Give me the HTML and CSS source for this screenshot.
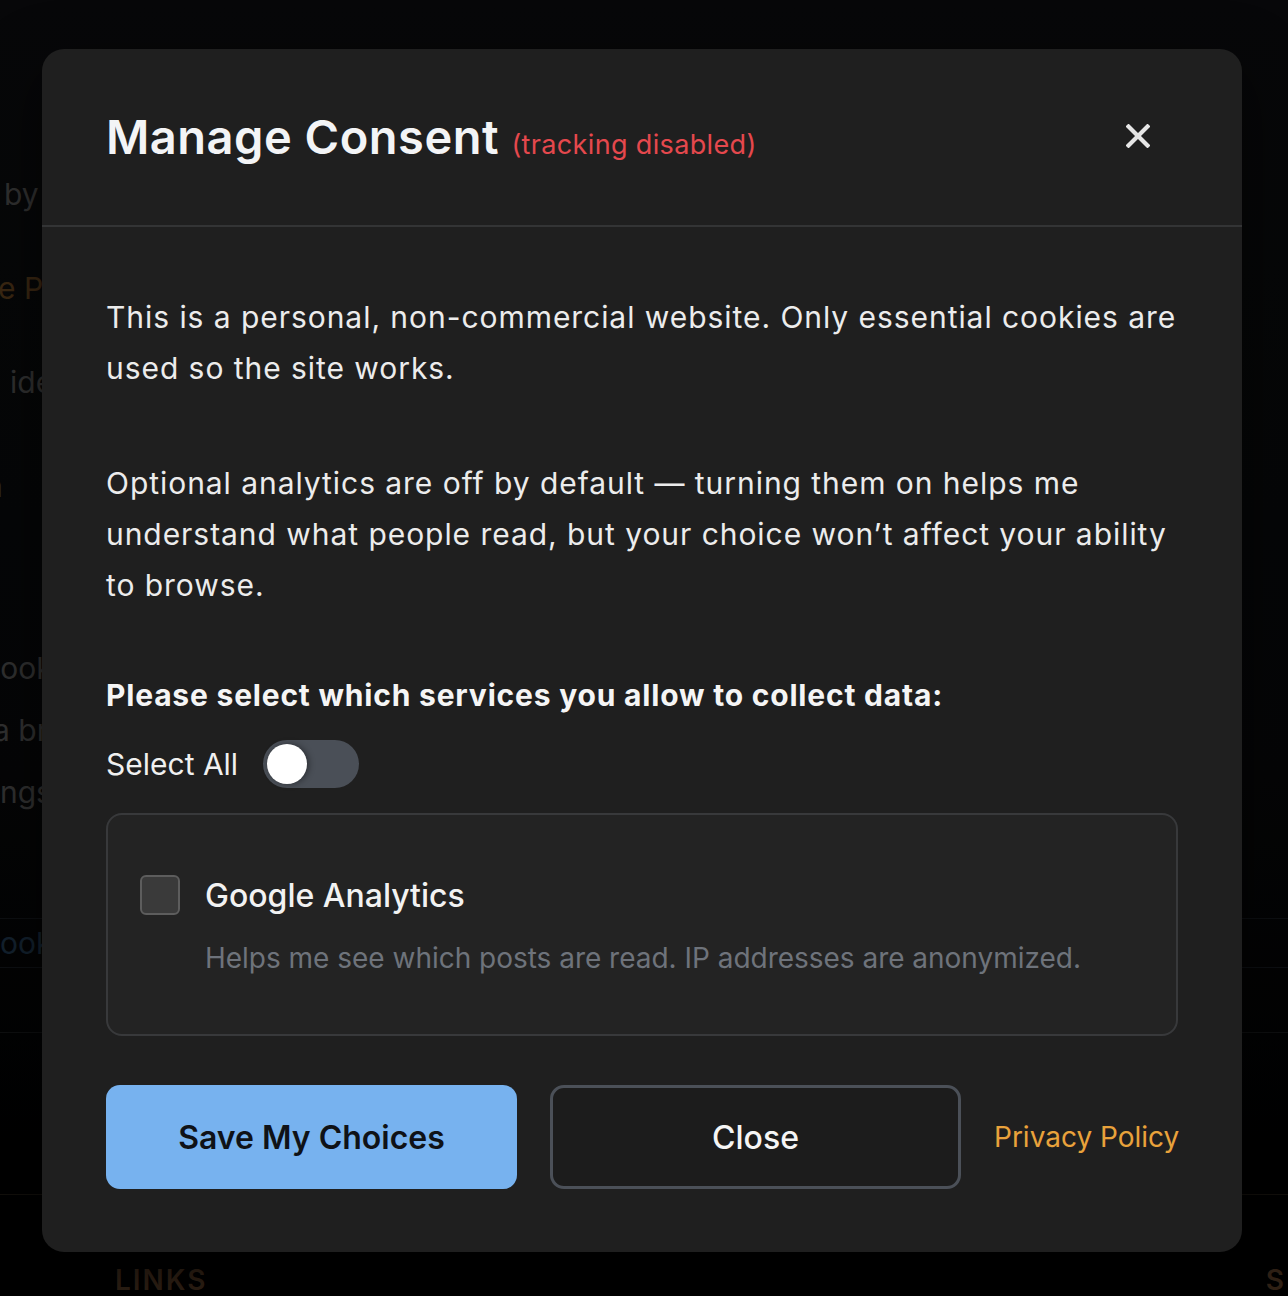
FILE: index.html
```html
<!DOCTYPE html>
<html lang="en">
<head>
<meta charset="utf-8">
<title>Manage Consent</title>
<link rel="stylesheet" href="styles.css">
</head>
<body>
<div class="page">
  <div class="bg-col">
    <p class="bg-line l1">by</p>
    <p class="bg-line l2 brown">e Pr</p>
    <p class="bg-line l3">ideas</p>
    <p class="bg-line l4">a</p>
    <p class="bg-line l5">book</p>
    <p class="bg-line l6">a bri</p>
    <p class="bg-line l7">ngs</p>
    <div class="bg-box"><span class="blue">ook</span></div>
    <div class="bg-sep"></div>
    <div class="bg-sep2"></div>
  </div>
  <div class="bg-footer">
    <span class="foot-h">LINKS</span>
    <span class="foot-h">S</span>
  </div>
</div>

<div class="overlay">
  <div class="modal" role="dialog" aria-labelledby="mc-title">
    <header class="modal-head">
      <h1 id="mc-title" class="title">Manage Consent <span class="sub">(tracking disabled)</span></h1>
      <button class="x-btn" aria-label="Close">
        <svg viewBox="0 0 24 24" width="24" height="24"><path d="M2.5 2.5 L21.5 21.5 M21.5 2.5 L2.5 21.5" stroke="#e6e6e6" stroke-width="4.2" stroke-linecap="square"/></svg>
      </button>
    </header>
    <div class="modal-body">
      <p class="para">This is a personal, non-commercial website. Only essential cookies are used so the site works.</p>
      <p class="para">Optional analytics are off by default — turning them on helps me understand what people read, but your choice won’t affect your ability to browse.</p>
      <h2 class="services">Please select which services you allow to collect data:</h2>
      <div class="select-all">
        <span>Select All</span>
        <span class="toggle"><span class="knob"></span></span>
      </div>
      <div class="service">
        <div class="service-row">
          <span class="check"></span>
          <span class="service-name">Google Analytics</span>
        </div>
        <p class="service-desc">Helps me see which posts are read. IP addresses are anonymized.</p>
      </div>
      <div class="actions">
        <button class="btn btn-save">Save My Choices</button>
        <button class="btn btn-close">Close</button>
        <a class="policy" href="#">Privacy Policy</a>
      </div>
    </div>
  </div>
</div>
</body>
</html>
```
FILE: styles.css
```css
* { box-sizing: border-box; }
html, body { margin: 0; padding: 0; }
body {
  background: #000;
  font-family: Inter, "Noto Sans", "Liberation Sans", sans-serif;
  width: 1288px;
  height: 1296px;
  overflow: hidden;
  position: relative;
}

/* faded page behind the dialog */
.page {
  height: 1296px;
  background: linear-gradient(180deg, #0b0c0e 0%, #08090a 60%, #000 100%);
}
.bg-col {
  width: 1288px;
  padding-top: 172px;
}
.bg-line {
  margin: 0;
  font-size: 30px;
  line-height: 44px;
  color: #4a4a4a;
  white-space: nowrap;
}
.l1 { margin-left: 4px; }
.l2 { margin-left: -2px; margin-top: 50px; }
.l3 { margin-left: 10px; margin-top: 50px; }
.l4 { margin-left: -14px; margin-top: 60px; }
.l5 { margin-left: -18px; margin-top: 138px; }
.l6 { margin-left: -7px; margin-top: 18px; }
.l7 { margin-left: 0; margin-top: 18px; }
.brown { color: #5a3d1c; }
.bg-box {
  margin-top: 104px;
  border-top: 1px solid #15181c;
  border-bottom: 1px solid #15181c;
  height: 50px;
  line-height: 48px;
  font-size: 30px;
  padding-left: 0;
  white-space: nowrap;
}
.blue { color: #1e3347; }
.bg-sep {
  margin-top: 64px;
  border-top: 1px solid #16171a;
}
.bg-sep2 {
  margin-top: 161px;
  border-top: 1px solid #1d1712;
}
.bg-footer {
  position: absolute;
  left: 0;
  top: 1262px;
  width: 1288px;
  display: flex;
  justify-content: space-between;
  padding-left: 115px;
  padding-right: 2px;
}
.foot-h {
  font-size: 28px;
  font-weight: 600;
  letter-spacing: 2px;
  color: #4a3321;
  line-height: 36px;
}

/* overlay + dialog */
.overlay {
  position: absolute;
  inset: 0;
  background: rgba(0, 0, 0, 0.35);
}
.modal {
  position: absolute;
  left: 42px;
  top: 49px;
  width: 1200px;
  height: 1203px;
  background: #1f1f1f;
  border-radius: 22px;
  box-shadow: 0 20px 60px rgba(0,0,0,0.6);
  overflow: hidden;
}
.modal-head {
  height: 178px;
  border-bottom: 2px solid #333435;
  display: flex;
  align-items: flex-start;
  justify-content: space-between;
  padding: 58px 92px 0 64px;
}
.title {
  margin: 0;
  font-size: 47px;
  font-weight: 600;
  line-height: 60px;
  color: #f3f4f6;
  letter-spacing: 0.5px;
}
.sub {
  font-size: 27px;
  font-weight: 400;
  color: #e5484d;
  letter-spacing: 0.35px;
}
.x-btn {
  background: none;
  border: 0;
  padding: 0;
  margin-top: 17px;
  width: 24px;
  height: 24px;
  display: flex;
}
.modal-body {
  padding: 65px 64px 64px 64px;
}
.para {
  margin: 0 0 64px 0;
  font-size: 30px;
  line-height: 51px;
  color: #ececec;
  letter-spacing: 0.95px;
}
.services {
  margin: 0;
  font-size: 30px;
  font-weight: 700;
  line-height: 40px;
  color: #f5f5f5;
  letter-spacing: 0.8px;
}
.select-all {
  margin-top: 25px;
  display: flex;
  align-items: center;
  gap: 25px;
  font-size: 30px;
  color: #f0f0f0;
  height: 48px;
  letter-spacing: 0;
}
.toggle {
  width: 96px;
  height: 48px;
  border-radius: 24px;
  background: #4a4f57;
  display: flex;
  align-items: center;
  padding-left: 4px;
}
.knob {
  width: 40px;
  height: 40px;
  border-radius: 50%;
  background: #fff;
  box-shadow: 2px 0 6px rgba(0,0,0,0.4);
}
.service {
  margin-top: 25px;
  height: 223px;
  border: 2px solid #38393b;
  border-radius: 16px;
  background: #232323;
  padding: 59px 32px 0 32px;
}
.service-row {
  display: flex;
  align-items: center;
  gap: 25px;
  height: 42px;
}
.check {
  width: 40px;
  height: 40px;
  border: 2px solid #5d5d5d;
  border-radius: 6px;
  background: #3a3a3a;
}
.service-name {
  font-size: 32px;
  font-weight: 500;
  color: #f2f2f2;
  letter-spacing: 0;
}
.service-desc {
  margin: 22px 0 0 65px;
  font-size: 28px;
  line-height: 40px;
  color: #6e737b;
  letter-spacing: -0.02px;
}
.actions {
  margin-top: 49px;
  display: flex;
  align-items: center;
  gap: 33px;
}
.btn {
  flex: 0 0 411px;
  width: 411px;
  height: 104px;
  border-radius: 14px;
  font-family: inherit;
  font-size: 32px;
}
.btn-save {
  background: #77b2ef;
  border: 0;
  color: #0f1217;
  font-weight: 600;
}
.btn-close {
  background: #1c1c1c;
  border: 3px solid #4b5058;
  color: #f5f5f5;
  font-weight: 500;
}
.policy {
  margin-left: auto;
  white-space: nowrap;
  font-size: 28px;
  color: #e9a23b;
  text-decoration: none;
  letter-spacing: 0;
}
```
